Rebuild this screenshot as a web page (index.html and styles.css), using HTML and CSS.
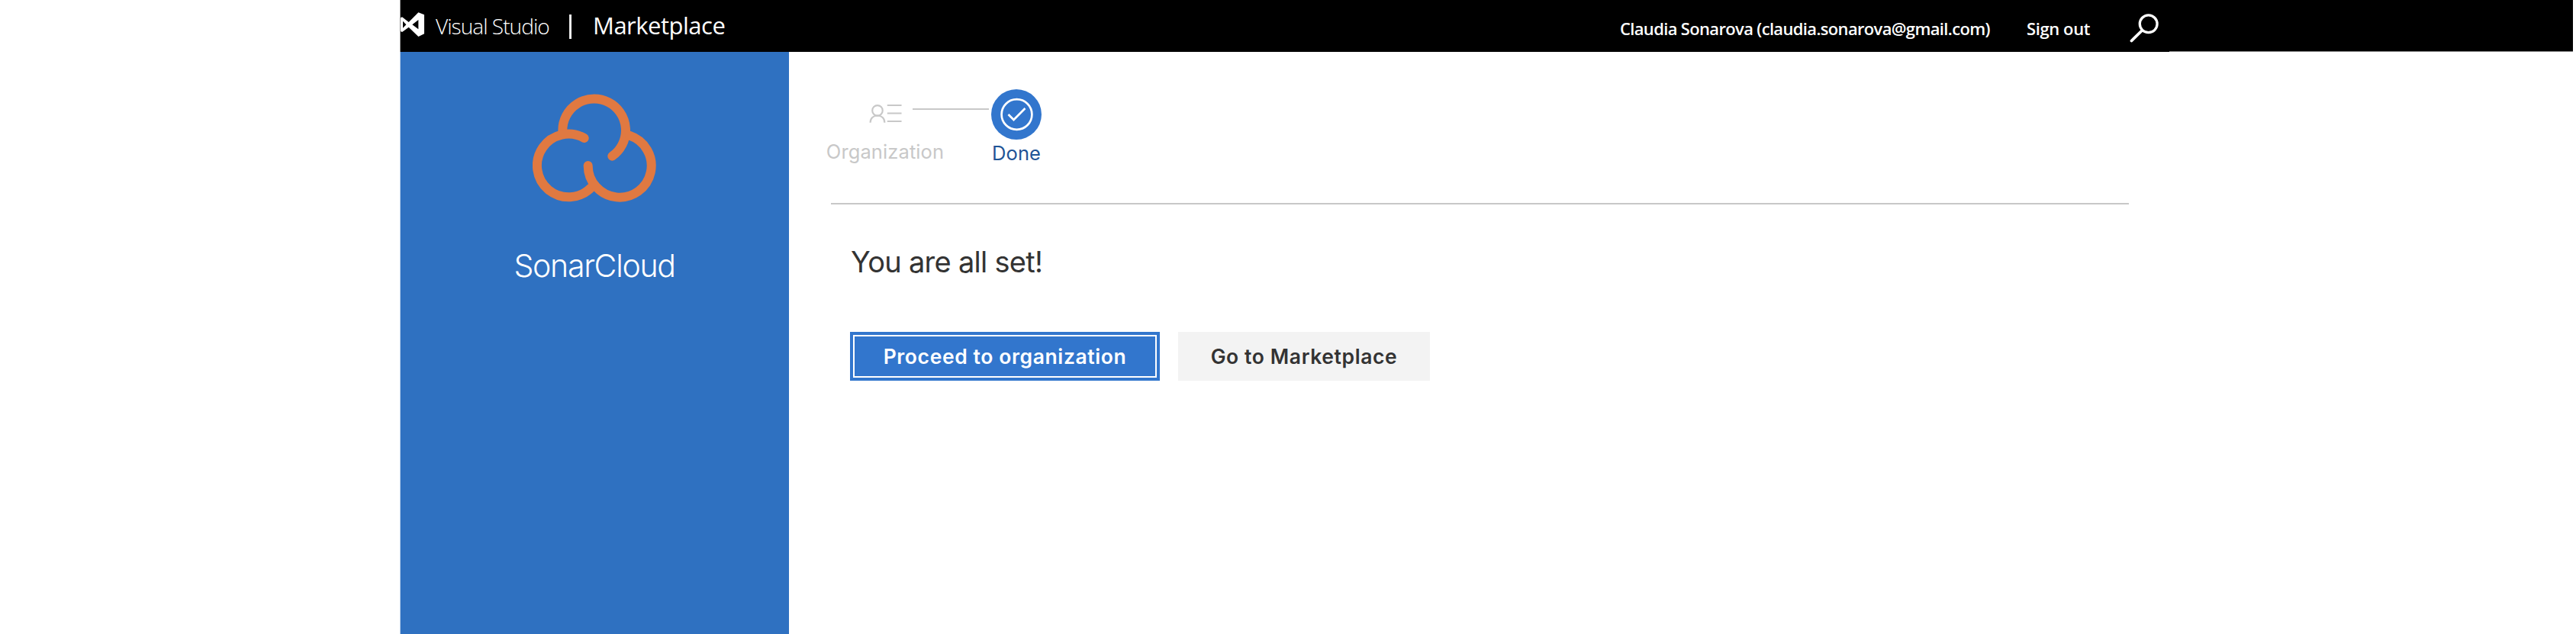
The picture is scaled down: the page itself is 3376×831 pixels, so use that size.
FILE: index.html
```html
<!DOCTYPE html>
<html lang="en">
<head>
<meta charset="utf-8">
<title>Visual Studio Marketplace</title>
<link rel="stylesheet" href="styles.css">
</head>
<body>
<div class="page">
  <header class="topbar">
    <div class="topbar-inner">
      <svg class="vs-logo" viewBox="45 49 93 96" aria-hidden="true"><path fill="#fff" fill-rule="evenodd" d="M45 71L51 68L77 88L115 50L138 59V134L115 145L77 108L51 127L45 124ZM115 79L91 97.500L115 116ZM54 84V111L67 97.500Z"/></svg>
      <span class="brand">Visual Studio</span>
      <span class="divider"></span>
      <span class="product">Marketplace</span>
      <span class="account user">Claudia Sonarova (claudia.sonarova@gmail.com)</span>
      <span class="account signout">Sign out</span>
      <svg class="search" viewBox="0 0 38 38" fill="none" stroke="#fff" stroke-linecap="round" aria-hidden="true"><circle cx="24.700" cy="13.300" r="11.400" stroke-width="3.300"/><path stroke-width="3.800" d="M16.200 22L2.500 35.500"/></svg>
    </div>
    <div class="topbar-rest"></div>
  </header>
  <div class="body">
    <aside class="sidebar">
      <svg class="cloud" viewBox="173 68 486 426" fill="none" stroke="#e07941" stroke-width="36" stroke-linecap="round" aria-hidden="true">
        <path d="M291 212A124 124 0 1 1 486 313"/>
        <path d="M376 242A124 124 0 1 0 403 437"/>
        <path d="M391 350A124.500 124.500 0 1 0 554 232"/>
      </svg>
      <div class="app-name"><span>SonarCloud</span></div>
    </aside>
    <main class="content">
      <div class="steps">
        <div class="step step-org">
          <svg class="org-icon" viewBox="238 108 128 76" fill="none" stroke="#c8c8c8" stroke-width="6.500" aria-hidden="true"><circle cx="270" cy="135" r="20.500"/><path d="M241.500 183C241.500 166 253 155 270 155S298.500 166 298.500 183M309 114H366M309 146H366M309 178H366"/></svg>
          <span class="step-label">Organization</span>
        </div>
        <div class="connector"></div>
        <div class="step step-done">
          <svg class="done-icon" viewBox="0 0 66 66" fill="none" stroke="#fff" stroke-width="2.700" aria-hidden="true"><circle cx="33" cy="33" r="33" fill="#3276cd" stroke="none"/><circle cx="33.500" cy="33" r="19.900"/><path d="M22.500 33L29.500 40L44.500 25"/></svg>
          <span class="step-label">Done</span>
        </div>
      </div>
      <section class="result">
        <h1><span>You are all set!</span></h1>
        <div class="actions">
          <button class="btn primary"><span>Proceed to organization</span></button>
          <button class="btn secondary"><span>Go to Marketplace</span></button>
        </div>
      </section>
    </main>
  </div>
</div>
</body>
</html>
```
FILE: styles.css
```css
* { box-sizing: border-box; }
body { margin: 0; background: #fff; overflow: hidden; font-family: Inter, "Liberation Sans", sans-serif; }
.page { height: 831px; padding: 0 4px 0 524px; display: flex; flex-direction: column; }
span { white-space: nowrap; }

.topbar { height: 68px; display: flex; background: #000; border-left: 1px solid #8a8a8a; color: #fff; font-family: "Open Sans", "Noto Sans", sans-serif; }
.topbar-inner { width: 2318px; display: flex; align-items: flex-start; }
.topbar-rest { flex: 1; border-bottom: 1px solid #858585; }
.vs-logo { width: 31px; height: 32px; margin-top: 16px; flex: none; }
.brand { width: 151px; margin: 14px 0 0 15px; font-size: 28px; line-height: 40px; font-weight: 300; letter-spacing: -0.95px; }
.divider { width: 3px; height: 32px; margin: 19px 0 0 24px; background: #eee; }
.product { margin: 12px 0 0 28px; font-size: 31px; line-height: 42px; letter-spacing: -0.5px; }
.account { font-size: 22px; line-height: 32px; font-weight: 600; margin-top: 21px; }
.user { margin-left: auto; width: 487px; letter-spacing: -0.66px; }
.signout { width: 84px; margin-left: 46px; letter-spacing: -0.4px; }
.search { width: 38px; height: 38px; margin: 18px 14px 0 51px; flex: none; }

.body { flex: 1; display: flex; }
.sidebar { width: 510px; padding-top: 55px; background: #2f71c1; border-left: 1px solid #a9c4e6; display: flex; flex-direction: column; align-items: center; }
.cloud { width: 162px; height: 142px; margin-right: 2px; }
.app-name { width: 212px; margin-top: 58px; color: #fff; font-size: 41px; line-height: 50px; font-weight: 300; letter-spacing: -1.3px; }
.content { flex: 1; padding: 49px 0 0 49px; }
.steps { display: flex; align-items: flex-start; width: 1707px; height: 149px; }
.step { display: flex; flex-direction: column; align-items: center; }
.step-label { font-size: 25.5px; line-height: 32px; letter-spacing: 0.1px; }
.step-org { width: 154px; padding-top: 19px; color: #c8c8c8; }
.org-icon { width: 43px; height: 25px; margin-bottom: 22px; }
.connector { width: 100px; height: 2px; margin: 44px 0 0 -41px; background: #c8c8c8; }
.steps .connector { margin-top: 25px; }
.step-done { width: 66px; margin-left: 3px; color: #1f5496; }
.done-icon { width: 66px; height: 66px; margin-bottom: 2px; }
.result { width: 1701px; margin-left: 6px; padding: 50px 0 0 25px; border-top: 2px solid #c8c8c8; }
h1 { margin: 0; padding-left: 1px; font-size: 38px; line-height: 50px; font-weight: 400; color: #333; letter-spacing: -0.72px; }
.actions { display: flex; gap: 24px; margin-top: 67px; }
.btn { height: 64px; padding: 0; border: 0; font: 600 26.5px/60px Inter, sans-serif; letter-spacing: 0.6px; }
.primary { width: 406px; color: #fff; background: #3276cd; outline: 2px solid #fff; outline-offset: -6px; }
.secondary { width: 330px; color: #333; background: #f3f3f3; }
```
